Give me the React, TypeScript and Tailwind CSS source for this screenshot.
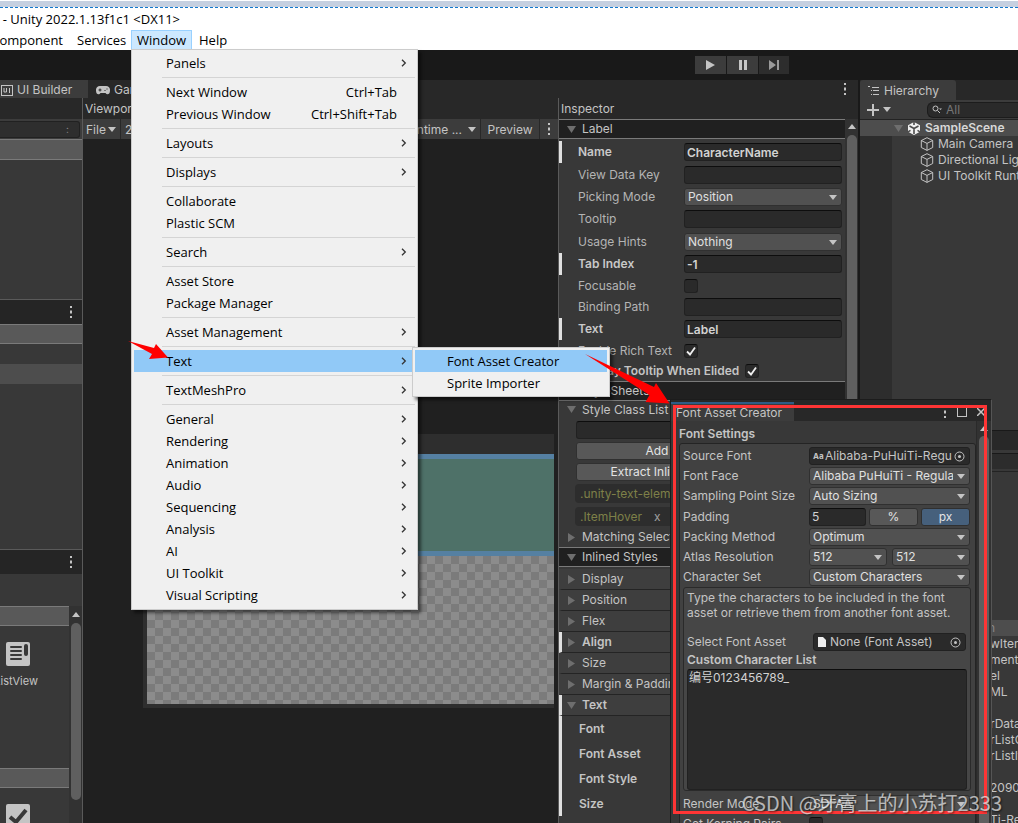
import React from 'react'

type MenuEntry = { label: string; keys?: string; sub?: boolean; active?: boolean }

const MENU_GROUPS: MenuEntry[][] = [
  [{ label: 'Panels', sub: true }],
  [{ label: 'Next Window', keys: 'Ctrl+Tab' }, { label: 'Previous Window', keys: 'Ctrl+Shift+Tab' }],
  [{ label: 'Layouts', sub: true }],
  [{ label: 'Displays', sub: true }],
  [{ label: 'Collaborate' }, { label: 'Plastic SCM' }],
  [{ label: 'Search', sub: true }],
  [{ label: 'Asset Store' }, { label: 'Package Manager' }],
  [{ label: 'Asset Management', sub: true }],
  [{ label: 'Text', sub: true, active: true }],
  [{ label: 'TextMeshPro', sub: true }],
  ['General', 'Rendering', 'Animation', 'Audio', 'Sequencing', 'Analysis', 'AI', 'UI Toolkit', 'Visual Scripting']
    .map(label => ({ label, sub: true })),
]

type Field = { label: string; kind: 'text' | 'select' | 'check'; value?: string; on?: boolean; bold?: boolean; height: string }

const FIELDS: Field[] = [
  { label: 'Name', kind: 'text', value: 'CharacterName', bold: true, height: 'h-[22px]' },
  { label: 'View Data Key', kind: 'text', height: 'h-[23px]' },
  { label: 'Picking Mode', kind: 'select', value: 'Position', height: 'h-[22px]' },
  { label: 'Tooltip', kind: 'text', height: 'h-[22px]' },
  { label: 'Usage Hints', kind: 'select', value: 'Nothing', height: 'h-[23px]' },
  { label: 'Tab Index', kind: 'text', value: '-1', bold: true, height: 'h-[22px]' },
  { label: 'Focusable', kind: 'check', height: 'h-[21px]' },
  { label: 'Binding Path', kind: 'text', height: 'h-[22px]' },
  { label: 'Text', kind: 'text', value: 'Label', bold: true, height: 'h-[22px]' },
  { label: 'Enable Rich Text', kind: 'check', on: true, height: 'h-[21px]' },
]

const PROJECT_ROWS = ['wItem', 'ment', 'el', 'ML', '', 'rData', 'rListC', 'rListIt', '', '20906', '', 'Ti-Re']

const Kebab = ({ className = '' }: { className?: string }) => (
  <svg className={className} width="4" height="12" viewBox="0 0 4 12" fill="#c4c4c4">
    <path d="M1 0h2v2H1zM1 4.500h2v3H1zM1 10h2v2H1z" />
  </svg>
)

const Caret = ({ className = '' }: { className?: string }) => (
  <svg className={className} width="8" height="5" viewBox="0 0 8 5" fill="#c4c4c4"><path d="M0 0h8L4 5z" /></svg>
)

const Foldout = ({ open }: { open?: boolean }) => (
  <svg className="shrink-0" width="9" height="9" viewBox="0 0 9 9" fill="#6e6e6e">
    <path d={open ? 'M0 1h9L4.500 8z' : 'M1 0v9l7-4.500z'} />
  </svg>
)

const Tick = () => (
  <svg className="pointer-events-none absolute inset-0" width="14" height="14" viewBox="0 0 14 14" fill="none" stroke="#eee" strokeWidth="1.8">
    <path d="M3 7.500l3 3 5-7" />
  </svg>
)

const ScrollUp = () => (
  <svg width="8" height="5" viewBox="0 0 8 5" fill="#c4c4c4"><path d="M0 5h8L4 0z" /></svg>
)

function Select({ id, label, value, className }: { id?: string; label?: string; value: string; className: string }) {
  return (
    <div className={`relative h-[18px] shrink-0 ${className}`}>
      <select id={id} aria-label={label} className="block h-[18px] w-full appearance-none rounded-[3px] border border-[#303030] bg-[#515151] pl-[3px] pr-4 text-xs leading-4 text-[#e0e0e0]">
        <option>{value}</option>
      </select>
      <Caret className="pointer-events-none absolute right-[5px] top-[7px]" />
    </div>
  )
}

function TextField({ id, value = '', className }: { id: string; value?: string; className: string }) {
  return (
    <input id={id} defaultValue={value} aria-label={id}
      className={`h-[18px] shrink-0 rounded-[3px] border border-[#212121] border-t-[#0d0d0d] bg-[#2a2a2a] px-[2px] text-xs text-[#d2d2d2] ${className}`} />
  )
}

function CheckBox({ id, on }: { id: string; on?: boolean }) {
  return (
    <span className="relative block h-[14px] w-[14px] shrink-0">
      <input id={id} type="checkbox" defaultChecked={on} aria-label={id}
        className="block h-[14px] w-[14px] appearance-none rounded-[3px] border border-[#212121] border-t-[#0d0d0d] bg-[#2a2a2a]" />
      {on && <Tick />}
    </span>
  )
}

function WindowMenu() {
  return (
    <div className="absolute left-0 top-[18px] z-30 w-[287px] border border-[#ccc] bg-[#f0f0f0] p-[2px] pb-[3px] shadow-[3px_3px_3px_rgba(0,0,0,0.5)]">
      {MENU_GROUPS.map((group, i) => (
        <div key={i}>
          {i > 0 && <div className="ml-7 flex h-[7px] items-center"><hr className="w-full border-[#d4d4d4]" /></div>}
          {group.map(item => (
            <div key={item.label} className="relative">
              <button className={`flex h-[22px] w-full items-center pb-px pl-8 pr-2 text-left ${item.active ? 'bg-[#91c9f7]' : ''}`}>
                <span className="flex-1">{item.label}</span>
                {item.keys && <span className="mr-[10px]">{item.keys}</span>}
                {item.sub && (
                  <svg width="6" height="8" viewBox="0 0 6 8" fill="none" stroke="#333" strokeWidth="1.3"><path d="M1 .7l3.300 3.300L1 7.300" /></svg>
                )}
              </button>
              {item.active && (
                <div className="absolute left-[278px] top-[-3px] w-[198px] border border-[#ccc] bg-[#f0f0f0] p-[2px] shadow-[3px_3px_3px_rgba(0,0,0,0.5)]">
                  <button className="flex h-[22px] w-full items-center bg-[#91c9f7] pb-px pl-8">Font Asset Creator</button>
                  <button className="flex h-[22px] w-full items-center pb-px pl-8">Sprite Importer</button>
                </div>
              )}
            </div>
          ))}
        </div>
      ))}
    </div>
  )
}

function TopBars() {
  return (
    <header className="bg-white font-['Open_Sans','Noto_Sans',sans-serif] text-[13px] leading-4 text-black">
      <div className="mt-px h-[6px] bg-[#c6d0e0]" />
      <div className="border-t border-dashed border-[#1177cc]" />
      <div className="flex h-[22px] w-[180px] items-center justify-end whitespace-nowrap pb-px">L - Unity 2022.1.13f1c1 &lt;DX11&gt;</div>
      <nav className="flex h-5 items-center">
        <div className="flex w-[63px] justify-end pb-px"><button>Component</button></div>
        <button className="ml-[14px] w-[54px] pb-px text-left">Services</button>
        <div className="relative">
          <button className="block h-5 w-[61px] border border-[#99d1ff] bg-[#cce8ff] pb-px leading-4">Window</button>
          <div className="absolute left-0 top-px"><WindowMenu /></div>
        </div>
        <button className="ml-[7px] pb-px">Help</button>
      </nav>
    </header>
  )
}

function Toolbar() {
  return (
    <div className="flex h-[30px] items-center gap-px bg-[#191919] pl-[695px]">
      <button aria-label="Play" className="flex h-[18px] w-[31px] items-center justify-center bg-[#3c3c3c]">
        <svg width="9" height="10" viewBox="0 0 9 10" fill="#c4c4c4"><path d="M0 0v10l9-5z" /></svg>
      </button>
      <button aria-label="Pause" className="flex h-[18px] w-[31px] items-center justify-center bg-[#3c3c3c]">
        <svg width="8" height="10" viewBox="0 0 8 10" fill="#c4c4c4"><path d="M0 0h3v10H0zM5 0h3v10H5z" /></svg>
      </button>
      <button aria-label="Step" className="flex h-[18px] w-[30px] items-center justify-center bg-[#2d2d2d]">
        <svg width="10" height="10" viewBox="0 0 10 10" fill="#9a9a9a"><path d="M0 0v10l7-5zM8 0h2v10H8z" /></svg>
      </button>
    </div>
  )
}

function LeftColumn() {
  return (
    <div className="flex w-[83px] shrink-0 flex-col border-r border-[#5a5a5a] bg-[#383838]">
      <div className="h-[21px] shrink-0 bg-[#282828]" />
      <div className="flex h-5 shrink-0 items-center bg-[#3c3c3c]">
        <div className="flex h-[17px] w-20 items-center justify-end rounded-r-[3px] border border-l-0 border-[#212121] bg-[#2e2e2e] pr-[10px] text-[10px] text-[#888]">:</div>
      </div>
      <div className="h-[21px] shrink-0 border-y border-[#7a7a7a] bg-[#595959]" />
      <div className="h-[139px] shrink-0" />
      <div className="flex h-[25px] shrink-0 items-center justify-end border-t border-[#5a5a5a] bg-[#252525] pr-[9px]"><Kebab /></div>
      <div className="h-5 shrink-0 border-y border-[#7a7a7a] bg-[#595959]" />
      <div className="h-5 shrink-0" />
      <div className="h-5 shrink-0 bg-[#4d4d4d]" />
      <div className="h-[165px] shrink-0" />
      <div className="flex h-[25px] shrink-0 items-center justify-end border-t border-[#5a5a5a] bg-[#252525] pr-[9px]"><Kebab /></div>
      <div className="h-8 shrink-0" />
      <div className="flex flex-1">
        <div className="w-[69px] overflow-hidden">
          <div className="h-5 border-y border-[#7a7a7a] bg-[#595959]" />
          <div className="flex h-[142px] flex-col pt-4">
            <svg className="ml-[6px]" width="24" height="24" viewBox="0 0 24 24">
              <rect width="24" height="24" rx="2" fill="#c4c4c4" />
              <path d="M5 5h10M5 9h10M5 13h10M5 17h10" stroke="#383838" strokeWidth="2" strokeLinecap="round" />
              <rect x="18" y="2" width="4" height="12" rx="2" fill="#383838" />
            </svg>
            <div className="mt-[7px] flex w-[38px] justify-end text-[11px] leading-4 text-[#c4c4c4]"><span>ListView</span></div>
          </div>
          <div className="h-5 border-y border-[#7a7a7a] bg-[#595959]" />
          <svg className="ml-[6px] mt-4" width="24" height="24" viewBox="0 0 24 24">
            <rect width="24" height="24" rx="2" fill="#c4c4c4" />
            <path d="M4 13l6 5L20 6" fill="none" stroke="#383838" strokeWidth="4" />
          </svg>
        </div>
        <div className="flex flex-1 flex-col items-center bg-[#323232] pt-[6px]">
          <ScrollUp />
          <div className="mt-[6px] h-[177px] w-[10px] rounded-full bg-[#5f5f5f]" />
        </div>
      </div>
    </div>
  )
}

function Viewport() {
  return (
    <div className="flex min-w-0 flex-1 flex-col bg-[#202020] text-[#c4c4c4]">
      <div className="flex h-[21px] shrink-0 items-center bg-[#282828] pl-[2px] pt-px">Viewport</div>
      <div className="flex h-5 shrink-0 gap-px bg-[#282828]">
        <button className="flex w-[37px] items-center justify-between bg-[#3c3c3c] pl-[3px] pr-1 pt-px">File<Caret /></button>
        <button className="w-12 bg-[#3c3c3c] pl-1 pt-px text-left">237%</button>
        <button className="flex flex-1 items-center justify-end gap-[6px] bg-[#3c3c3c] pr-1 pt-px">Unity Default Runtime ...<Caret /></button>
        <button className="w-[58px] bg-[#3c3c3c] pt-px">Preview</button>
        <button aria-label="More" className="flex w-[18px] items-center justify-center bg-[#3c3c3c]"><Kebab /></button>
      </div>
      <div className="ml-[60px] mr-1 mt-[295px] h-[274px] shrink-0 bg-[#2e2e2e] pb-1 pl-1 pt-5">
        <div className="h-[102px] border-y-[5px] border-[#5580a2] bg-[#4e7168]" />
        <div className="h-[148px] bg-[conic-gradient(#8c8c8c_25%,#7b7b7b_0_50%,#8c8c8c_0_75%,#7b7b7b_0)] bg-[length:16px_16px]" />
      </div>
    </div>
  )
}

function FieldRow({ f }: { f: Field }) {
  return (
    <div className={`flex items-center border-l-[3px] pl-4 ${f.height} ${f.bold ? 'border-[#e0e0e0] font-semibold text-[#c8c8c8]' : 'border-transparent text-[#b4b4b4]'}`}>
      <label htmlFor={f.label} className="w-[106px] shrink-0">{f.label}</label>
      {f.kind === 'text' && <TextField id={f.label} value={f.value} className="w-[158px]" />}
      {f.kind === 'select' && <Select id={f.label} value={f.value ?? ''} className="w-[158px]" />}
      {f.kind === 'check' && <CheckBox id={f.label} on={f.on} />}
    </div>
  )
}

function FoldRow({ label, open, bold }: { label: string; open?: boolean; bold?: boolean }) {
  return (
    <div className={`flex h-[21px] items-center gap-[6px] border-b border-l-[3px] border-b-[#242424] bg-[#3e3e3e] pl-[5px] ${bold ? 'border-l-[#e0e0e0] font-semibold' : 'border-l-[#3e3e3e]'}`}>
      <Foldout open={open} />{label}
    </div>
  )
}

function SectionHead({ label, open }: { label: string; open?: boolean }) {
  return (
    <div className="flex h-5 items-center gap-[6px] border-y border-[#7a7a7a] bg-[#202020] pl-2">
      <Foldout open={open} />{label}
    </div>
  )
}

function Inspector() {
  return (
    <div className="flex w-[300px] shrink-0 flex-col border-l border-[#5a5a5a] bg-[#383838] text-[#c4c4c4]">
      <div className="flex h-[21px] shrink-0 items-center bg-[#282828] pl-[2px] pt-px">Inspector</div>
      <div className="flex min-h-0 flex-1">
        <div className="w-[286px] whitespace-nowrap">
          <SectionHead label="Label" open />
          <div className="pt-[2px]">{FIELDS.map(f => <FieldRow key={f.label} f={f} />)}</div>
          <div className="flex h-5 items-center gap-[6px] pl-[19px] font-semibold">
            <label htmlFor="elided">Display Tooltip When Elided</label>
            <CheckBox id="elided" on />
          </div>
          <SectionHead label="StyleSheets" open />
          <div className="flex h-[17px] items-center gap-[6px] pl-2"><Foldout open />Style Class List</div>
          <div className="flex flex-col gap-[3px] pl-[17px] pt-[3px]">
            <TextField id="Style class" className="w-[266px]" />
            <button className="h-[18px] w-[266px] rounded-[3px] border border-[#303030] bg-[#585858] leading-4 text-[#e4e4e4]">Add Style Class to List</button>
            <button className="h-[18px] w-[266px] rounded-[3px] border border-[#303030] bg-[#585858] leading-4 text-[#e4e4e4]">Extract Inlined Styles to New Class</button>
          </div>
          <div className="flex flex-col items-start gap-1 pb-px pl-4 pt-[3px] text-[#7e8048]">
            <div className="flex h-[19px] items-center gap-3 rounded bg-[#2d2d2d] px-[5px]">.unity-text-element<button className="text-[#a0a0a0]">x</button></div>
            <div className="flex h-[19px] w-[104px] items-center gap-3 rounded bg-[#2d2d2d] px-[5px]">.ItemHover<button className="text-[#a0a0a0]">x</button></div>
          </div>
          <div className="flex h-5 items-center gap-[6px] pl-2"><Foldout />Matching Selectors</div>
          <SectionHead label="Inlined Styles" open />
          <div className="pt-[2px]">
            <FoldRow label="Display" />
            <FoldRow label="Position" />
            <FoldRow label="Flex" />
            <FoldRow label="Align" bold />
            <FoldRow label="Size" />
            <FoldRow label="Margin & Padding" />
            <FoldRow label="Text" open bold />
          </div>
          <div className="border-l-[3px] border-[#e0e0e0] pl-[17px] font-semibold">
            {['Font', 'Font Asset', 'Font Style', 'Size'].map(s => <div key={s} className="flex h-[25px] items-center">{s}</div>)}
          </div>
          <div className="pl-5 pt-1">Color</div>
        </div>
        <div className="flex flex-1 flex-col items-center bg-[#323232] pt-[5px]">
          <ScrollUp />
          <div className="mt-[6px] h-[560px] w-[10px] rounded-full bg-[#5f5f5f]" />
        </div>
      </div>
    </div>
  )
}

function UIBuilder() {
  return (
    <section className="flex w-[858px] min-w-0 shrink-0 flex-col">
      <div className="flex h-[18px] shrink-0 bg-[#282828] text-[#c4c4c4]">
        <button className="flex w-[88px] items-center gap-1 bg-[#3c3c3c] pl-px pt-[2px]">
          <svg width="12" height="11" viewBox="0 0 12 11" fill="none" stroke="#c4c4c4">
            <rect x=".5" y=".5" width="11" height="10" /><path d="M3 3v4h2.500V3M8.500 3v5" />
          </svg>
          UI Builder
        </button>
        <button className="flex items-center gap-1 pl-2 pt-[2px]">
          <svg width="14" height="9" viewBox="0 0 14 9">
            <path d="M4 0h6a4 4 0 0 1 4 4.500c0 4-3 5-4.500 2.500h-5C3 9.500 0 8.500 0 4.500A4 4 0 0 1 4 0z" fill="#c4c4c4" />
            <path d="M2.500 4h3M4 2.500v3M8.500 4.500h1M10.500 3h1" stroke="#282828" />
          </svg>
          Game
        </button>
        <div className="flex flex-1 items-center justify-end pr-[11px]"><Kebab /></div>
      </div>
      <div className="flex min-h-0 flex-1">
        <LeftColumn />
        <Viewport />
        <Inspector />
      </div>
    </section>
  )
}

const Cube = () => (
  <svg className="shrink-0" width="14" height="14" viewBox="0 0 14 14" fill="none" stroke="#c4c4c4">
    <path d="M7 .7l5.700 2.800v7L7 13.400 1.300 10.500v-7zM1.300 3.500L7 6.400l5.700-2.900M7 6.400v7" />
  </svg>
)

function Hierarchy() {
  return (
    <section className="flex min-w-0 flex-1 flex-col overflow-hidden whitespace-nowrap bg-[#383838] text-[#c4c4c4]">
      <div className="flex h-5 shrink-0 bg-[#282828]">
        <button className="flex w-24 items-center gap-1 rounded-t-[3px] bg-[#3c3c3c] pl-2 pt-px">
          <svg width="12" height="10" viewBox="0 0 12 10" fill="none" stroke="#c4c4c4">
            <path d="M0 .5h2M4 1.500h7M3 4.500h1M5 4.500h6M3 8.500h1M5 8.500h6" />
          </svg>
          Hierarchy
        </button>
      </div>
      <div className="flex h-5 shrink-0 items-center border-b border-[#232323] bg-[#3c3c3c] pl-[7px]">
        <svg width="12" height="12" viewBox="0 0 12 12" stroke="#c4c4c4" strokeWidth="2"><path d="M6 0v12M0 6h12" /></svg>
        <Caret className="ml-1" />
        <div className="ml-9 flex h-4 flex-1 items-center rounded-l-md border border-r-0 border-[#1c1c1c] bg-[#2a2a2a] pl-1">
          <svg className="shrink-0" width="10" height="9" viewBox="0 0 10 9" fill="none" stroke="#c4c4c4">
            <circle cx="3.500" cy="3.500" r="2.500" /><path d="M5.500 5.500L8 8" /><path d="M7 3.500h3L8.500 5z" fill="#c4c4c4" stroke="none" />
          </svg>
          <input aria-label="Search hierarchy" placeholder="All" className="w-full bg-transparent pl-1 placeholder:text-[#777]" />
        </div>
      </div>
      <div className="flex h-[16px] shrink-0 items-center gap-[5px] bg-[#4d4d4d] pl-[34px] font-semibold text-[#d8d8d8]">
        <Foldout open />
        <svg className="shrink-0" width="12" height="13" viewBox="0 0 12 13">
          <path d="M6 0l6 3.200v6.600L6 13 0 9.800V3.200z" fill="#f0f0f0" />
          <path d="M6 6.500V12M6 6.500L1.500 4M6 6.500L10.500 4" fill="none" stroke="#4d4d4d" strokeWidth="1.600" />
          <path d="M6 0v3M0 9.800l2.500-1.400M12 9.800L9.500 8.400" fill="none" stroke="#4d4d4d" strokeWidth="1.600" />
        </svg>
        SampleScene
      </div>
      <div className="flex h-[294px] shrink-0">
        <div className="w-8 shrink-0 bg-[#2d2d2d]" />
        <div>
          {['Main Camera', 'Directional Light', 'UI Toolkit Runtime'].map(n => (
            <div key={n} className="flex h-4 items-center gap-1 pl-7"><Cube />{n}</div>
          ))}
        </div>
      </div>
      <div className="h-5 shrink-0 border-t border-[#191919] bg-[#282828]" />
      <div className="h-[3px] shrink-0" />
      <div className="h-4 shrink-0 border-t border-[#191919] bg-[#2c2c2c]" />
      <div className="mb-[148px] h-[3px] shrink-0 border-b border-[#232323]" />
      <div className="h-4 shrink-0 bg-[#4d4d4d] pl-[128px] leading-4 text-[#888]">n</div>
      {PROJECT_ROWS.map((r, i) => <div key={i} className="h-4 shrink-0 pl-[130px] leading-4">{r}</div>)}
    </section>
  )
}

const Target = () => (
  <svg className="shrink-0" width="11" height="11" viewBox="0 0 11 11"><circle cx="5.500" cy="5.500" r="4.500" fill="none" stroke="#c4c4c4" /><circle cx="5.500" cy="5.500" r="1.500" fill="#c4c4c4" /></svg>
)

function SettingRow({ label, id, tall, children }: { label: string; id?: string; tall?: boolean; children: React.ReactNode }) {
  return (
    <div className={`flex items-center ${tall ? 'h-[21px]' : 'h-5'}`}>
      <label htmlFor={id} className="w-[126px] shrink-0">{label}</label>
      {children}
    </div>
  )
}

function FontAssetCreator() {
  return (
    <section className="absolute bottom-0 left-[670px] top-[399px] z-10 flex w-[322px] flex-col overflow-hidden border-x border-t border-[#1c1c1c] border-r-[#555] bg-[#383838] text-[#c4c4c4]">
      <div className="flex h-[21px] shrink-0 items-end bg-[#282828]">
        <div className="flex h-[19px] w-[123px] items-center border-t-2 border-[#2c5d87] bg-[#3c3c3c] pl-[5px]">Font Asset Creator</div>
        <div className="flex h-[19px] flex-1 items-center justify-end gap-[10px] pr-[6px]">
          <Kebab />
          <button aria-label="Maximize" className="h-[10px] w-[10px] border border-[#c4c4c4]" />
          <button aria-label="Close"><svg width="8" height="8" viewBox="0 0 8 8" stroke="#c4c4c4" strokeWidth="1.500"><path d="M0 0l8 8M8 0L0 8" /></svg></button>
        </div>
      </div>
      <div className="flex min-h-0 flex-1">
        <div className="w-[305px] shrink-0 pl-2">
          <h2 className="pb-px pt-1 text-[12px] font-semibold leading-[17px]">Font Settings</h2>
          <div className="h-[460px] rounded-[3px] border border-[#242424] bg-[#414141] pl-[3px] pr-1 pt-[2px]">
            <SettingRow label="Source Font">
              <div className="flex h-[18px] w-[161px] items-center gap-[2px] overflow-hidden rounded-[3px] border border-[#212121] bg-[#2a2a2a] pl-[3px] pr-1">
                <span className="w-[10px] shrink-0 text-[8px] font-bold">Aa</span>
                <span className="w-[127px] shrink-0 overflow-hidden whitespace-nowrap">Alibaba-PuHuiTi-Regu</span>
                <Target />
              </div>
            </SettingRow>
            <SettingRow label="Font Face" id="face"><Select id="face" value="Alibaba PuHuiTi - Regular" className="w-[161px]" /></SettingRow>
            <SettingRow label="Sampling Point Size" id="size"><Select id="size" value="Auto Sizing" className="w-[161px]" /></SettingRow>
            <SettingRow label="Padding" id="padding" tall>
              <TextField id="padding" value="5" className="w-[57px]" />
              <button className="ml-[3px] h-[18px] w-[49px] rounded-[3px] border border-[#303030] bg-[#585858] leading-4 text-[#e4e4e4]">%</button>
              <button className="ml-[3px] h-[18px] w-[49px] rounded-[3px] border border-[#303030] bg-[#46607c] leading-4 text-[#e4e4e4]">px</button>
            </SettingRow>
            <SettingRow label="Packing Method" id="packing"><Select id="packing" value="Optimum" className="w-[161px]" /></SettingRow>
            <SettingRow label="Atlas Resolution">
              <Select label="Atlas width" value="512" className="w-[78px]" />
              <Select label="Atlas height" value="512" className="ml-[5px] w-[78px]" />
            </SettingRow>
            <SettingRow label="Character Set" id="charset"><Select id="charset" value="Custom Characters" className="w-[161px]" /></SettingRow>
            <div className="h-[204px] rounded-[3px] border border-[#2a2a2a] bg-[#464646] px-[3px]">
              <p className="pt-[2px] leading-[15px]">Type the characters to be included in the font asset or retrieve them from another font asset.</p>
              <div className="mt-3 flex h-5 items-center">
                <span className="w-[126px]">Select Font Asset</span>
                <div className="flex h-[18px] w-[153px] items-center gap-1 rounded-[3px] border border-[#212121] bg-[#2a2a2a] pl-1 pr-1">
                  <svg width="8" height="10" viewBox="0 0 8 10" fill="#eee"><path d="M0 0h5l3 3v7H0z" /></svg>
                  <span className="flex-1">None (Font Asset)</span>
                  <Target />
                </div>
              </div>
              <label htmlFor="chars" className="block font-semibold leading-4">Custom Character List</label>
              <textarea id="chars" defaultValue="编号0123456789_"
                className="mt-px block h-[121px] w-full resize-none rounded-[3px] border border-[#212121] border-t-[#0d0d0d] bg-[#2a2a2a] px-px text-[#d2d2d2]" />
            </div>
            <div className="mt-[3px]"><SettingRow label="Render Mode" id="render"><Select id="render" value="SDFAA" className="w-[161px]" /></SettingRow></div>
            <SettingRow label="Get Kerning Pairs" id="kerning"><CheckBox id="kerning" /></SettingRow>
          </div>
        </div>
        <div className="flex flex-1 flex-col items-center border-l border-[#2a2a2a] bg-[#323232] pt-[5px]">
          <ScrollUp />
          <div className="mt-[5px] w-[10px] flex-1 rounded-t-full bg-[#5f5f5f]" />
        </div>
      </div>
    </section>
  )
}

// hand-drawn markers pointing out the menu path and the resulting window
function Annotations() {
  return (
    <div className="pointer-events-none absolute inset-0 z-40">
      <div className="absolute left-[673px] top-[405px] h-[409px] w-[314px] border-[3px] border-[#ff3535]" />
      <svg className="absolute left-0 top-0" width="700" height="420" viewBox="0 0 700 420" fill="#ff0000">
        <path d="M128 341l26 7 2-4 12 13.500-19 1.500 3-5z" />
        <path d="M585 354l69 33 2-4 13.500 20.500-24-1.500 4-7z" />
      </svg>
      <div className="absolute bottom-[6px] right-4 whitespace-nowrap font-['Noto_Sans_CJK_SC',sans-serif] text-[20px] leading-7 text-white/65 [text-shadow:1px_1px_2px_rgba(0,0,0,0.6)]">
        CSDN @牙膏上的小苏打2333
      </div>
    </div>
  )
}

export default function App() {
  return (
    <div className="relative flex h-screen flex-col overflow-hidden bg-white font-['Inter','Noto_Sans_CJK_SC',sans-serif] text-xs leading-4">
      <TopBars />
      <Toolbar />
      <main className="flex min-h-0 flex-1 gap-[2px] bg-[#191919]">
        <UIBuilder />
        <Hierarchy />
      </main>
      <FontAssetCreator />
      <Annotations />
    </div>
  )
}
